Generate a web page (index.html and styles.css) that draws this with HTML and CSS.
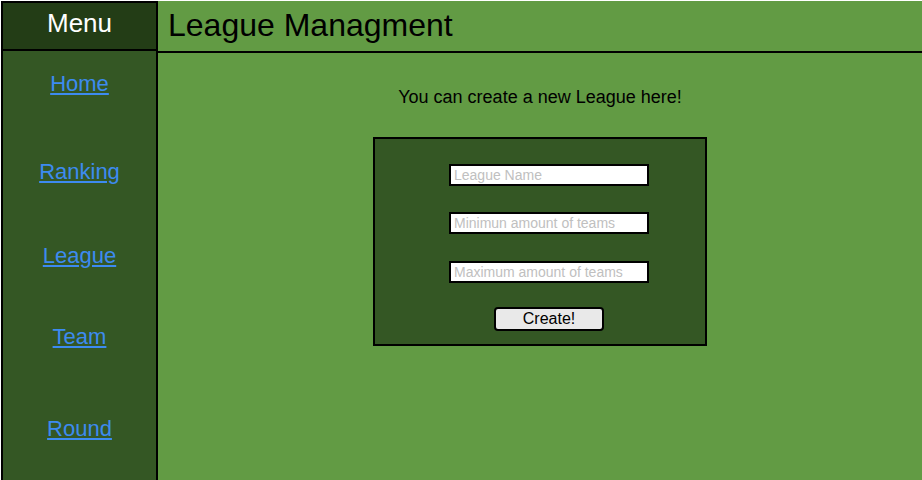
FILE: index.html
```html
<!DOCTYPE html>
<html>
<head>
<meta charset="utf-8">
<title>League Managment</title>
<link rel="stylesheet" href="styles.css">
</head>
<body>
<div class="page">
  <aside class="sidebar">
    <div class="menu-title">Menu</div>
    <nav class="nav">
      <a class="nav-link nav-home" href="#">Home</a>
      <a class="nav-link nav-ranking" href="#">Ranking</a>
      <a class="nav-link nav-league" href="#">League</a>
      <a class="nav-link nav-team" href="#">Team</a>
      <a class="nav-link nav-round" href="#">Round</a>
    </nav>
  </aside>
  <main class="main">
    <header class="header">
      <h1 class="title">League Managment</h1>
    </header>
    <section class="content">
      <p class="intro">You can create a new League here!</p>
      <form class="league-form">
        <input class="field" type="text" placeholder="League Name">
        <input class="field" type="text" placeholder="Minimun amount of teams">
        <input class="field" type="text" placeholder="Maximum amount of teams">
        <button class="create-btn" type="button">Create!</button>
      </form>
    </section>
  </main>
</div>
</body>
</html>
```
FILE: styles.css
```css
html, body {
  margin: 0;
  padding: 0;
  height: 100%;
  background: #ffffff;
}
body {
  font-family: "Liberation Sans", Arial, sans-serif;
}
.page {
  display: flex;
  box-sizing: border-box;
  height: 100vh;
  padding: 1px 0 0 1px;
}
.sidebar {
  width: 157px;
  flex: none;
  box-sizing: border-box;
  border: 2px solid #000;
  border-bottom: none;
  background: #345724;
  display: flex;
  flex-direction: column;
}
.menu-title {
  height: 46px;
  border-bottom: 2px solid #000;
  background: #233d16;
  color: #fff;
  font-size: 26px;
  text-align: center;
  line-height: 40px;
}
.nav {
  display: flex;
  flex-direction: column;
  align-items: center;
  padding-top: 20px;
}
.nav-link {
  color: #3d8bf0;
  font-size: 22px;
  line-height: 25px;
  text-decoration: underline;
}
.nav-ranking { margin-top: 63px; }
.nav-league { margin-top: 59px; }
.nav-team { margin-top: 56px; }
.nav-round { margin-top: 67px; }
.main {
  flex: 1;
  background: #629b44;
  display: flex;
  flex-direction: column;
}
.header {
  height: 50px;
  border-bottom: 2px solid #000;
  padding-left: 10px;
  display: flex;
  align-items: center;
}
.title {
  margin: 0;
  font-weight: normal;
  font-size: 32px;
  color: #000;
  line-height: 36px;
  padding-bottom: 2px;
}
.content {
  display: flex;
  flex-direction: column;
  align-items: center;
}
.intro {
  margin: 34px 0 0;
  font-size: 18px;
  line-height: 20px;
  color: #000;
}
.league-form {
  margin-top: 30px;
  box-sizing: border-box;
  width: 334px;
  border: 2px solid #000;
  background: #345724;
  display: flex;
  flex-direction: column;
  align-items: center;
  padding: 25px 0 13px 18px;
}
.field {
  box-sizing: border-box;
  width: 200px;
  height: 22px;
  border: 2px solid #000;
  padding: 0 3px;
  margin: 0 0 26px;
  font-family: "Liberation Sans", Arial, sans-serif;
  font-size: 14px;
  background: #fff;
  outline: none;
}
.field:nth-of-type(2) { margin-bottom: 27px; }
.field:nth-of-type(3) { margin-bottom: 24px; }
.field::placeholder {
  color: #c0c0c0;
}
.create-btn {
  box-sizing: border-box;
  width: 110px;
  height: 24px;
  border: 2px solid #000;
  border-radius: 4px;
  background: #e9e9e9;
  color: #000;
  font-family: "Liberation Sans", Arial, sans-serif;
  font-size: 16px;
  padding: 0;
  line-height: 18px;
}
```
